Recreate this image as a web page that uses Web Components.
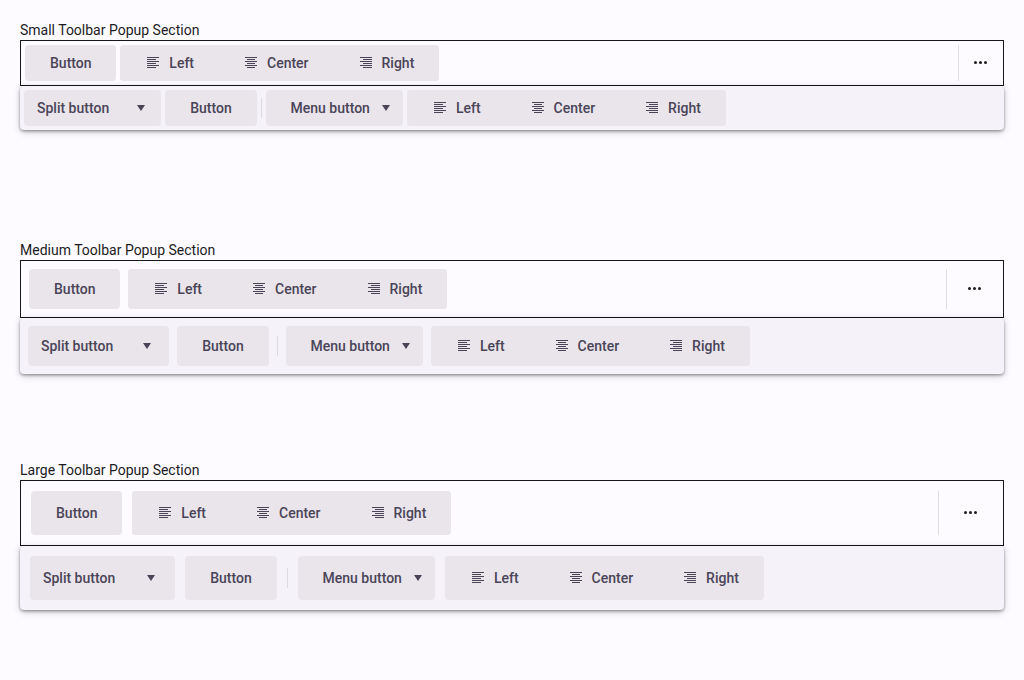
<!DOCTYPE html>
<html lang="en">
<head>
<meta charset="utf-8">
<title>Toolbar Popup Sections</title>
<style>
html,body{margin:0;height:100%;background:#fdfbff}
body{padding:20px;box-sizing:border-box;overflow:hidden;font:14px/20px Roboto,sans-serif;color:#1c1b1e}
</style>
</head>
<body>
<popup-section heading="Small Toolbar Popup Section" style="--gap:4px;--h:36px;--arrow:11px"></popup-section>
<popup-section heading="Medium Toolbar Popup Section" style="--gap:8px;--h:40px;--arrow:13px"></popup-section>
<popup-section heading="Large Toolbar Popup Section" style="--gap:10px;--h:44px;--arrow:15px"></popup-section>
<script>
const PATHS = {
  left: 'M2 2h12v1H2zM2 4h9v1H2zM2 6h12v1H2zM2 8h9v1H2zM2 10h12v1H2zM2 12h9v1H2z',
  center: 'M2 2h12v1H2zM4 4h8v1H4zM2 6h12v1H2zM4 8h8v1H4zM2 10h12v1H2zM4 12h8v1H4z',
  right: 'M2 2h12v1H2zM5 4h9v1H5zM2 6h12v1H2zM5 8h9v1H5zM2 10h12v1H2zM5 12h9v1H5z',
  caret: 'M8 11 4 5h8z',
  more: 'M1 7.5a1.5 1.5 0 1 1 3 0a1.5 1.5 0 1 1-3 0zM6 7.5a1.5 1.5 0 1 1 3 0a1.5 1.5 0 1 1-3 0zM11 7.5a1.5 1.5 0 1 1 3 0a1.5 1.5 0 1 1-3 0z'
};
function define(name, render) {
  customElements.define(name, class extends HTMLElement {
    constructor() { super(); this.attachShadow({mode: 'open'}); }
    connectedCallback() { this.shadowRoot.innerHTML = render(this); }
  });
}
define('ui-icon', el => `<style>:host{display:block;flex:none;width:16px;height:16px}svg{display:block}</style>
<svg width="16" height="16" viewBox="0 0 16 16" fill="currentColor"><path d="${PATHS[el.getAttribute('name')]}"/></svg>`);
define('ui-button', () => `<style>
:host{display:flex;align-items:center;gap:8px;height:var(--h);box-sizing:border-box;padding:0 25px;border-radius:4px;background:#e9e5eb;color:#4a4458;font-weight:500;white-space:nowrap}
</style><slot></slot>`);
define('ui-menu-button', () => `<style>
:host{display:flex;align-items:center;gap:8px;height:var(--h);box-sizing:border-box;padding:0 9px 0 24.8px;border-radius:4px;background:#e9e5eb;color:#4a4458;font-weight:500;white-space:nowrap}
</style><slot></slot><ui-icon name="caret"></ui-icon>`);
define('ui-split-button', () => `<style>
:host{display:flex;align-items:center;height:var(--h);border-radius:4px;background:#e9e5eb;color:#4a4458;font-weight:500;white-space:nowrap}
.label{padding:0 13px}
.arrow{padding:0 calc(var(--arrow) + 1px);margin-left:-1px}
</style><span class="label"><slot></slot></span><span class="arrow"><ui-icon name="caret"></ui-icon></span>`);
define('ui-button-group', () => `<style>
:host{display:flex;border-radius:4px;background:#e9e5eb}
ui-button+ui-button{margin-left:-1px}
</style>
<ui-button><ui-icon name="left"></ui-icon>Left</ui-button><ui-button><ui-icon name="center"></ui-icon>Center</ui-button><ui-button><ui-icon name="right"></ui-icon>Right</ui-button>`);
define('ui-separator', () => `<style>:host{display:block;width:1px;height:20px;background:#dddae1}</style>`);
define('ui-toolbar', () => `<style>
:host{display:flex;align-items:center;gap:var(--gap);padding:var(--gap) 0 var(--gap) var(--gap);border:1px solid #16151a;background:#fdfbff}
::slotted(ui-button){padding-right:24.8px!important}
.more{margin-left:auto;height:var(--h);width:calc(var(--h) + var(--gap) * 2);border-left:1px solid #e0dde3;display:flex;align-items:center;justify-content:center}
</style><slot></slot><div class="more"><ui-icon name="more"></ui-icon></div>`);
define('ui-popup', () => `<style>
:host{display:flex;align-items:center;gap:var(--gap);padding:var(--gap);border-radius:4px;background:#f5f2fa;box-shadow:0 2px 4px -1px rgba(0,0,0,.2),0 1px 3px rgba(0,0,0,.3),0 2px 8px rgba(0,0,0,.15)}
</style><slot></slot>`);
define('popup-section', el => `<style>:host{display:block;height:220px}</style>
<div>${el.getAttribute('heading')}</div>
<ui-toolbar><ui-button>Button</ui-button><ui-button-group></ui-button-group></ui-toolbar>
<ui-popup><ui-split-button>Split button</ui-split-button><ui-button>Button</ui-button><ui-separator></ui-separator><ui-menu-button>Menu button</ui-menu-button><ui-button-group></ui-button-group></ui-popup>`);
</script>
</body>
</html>
